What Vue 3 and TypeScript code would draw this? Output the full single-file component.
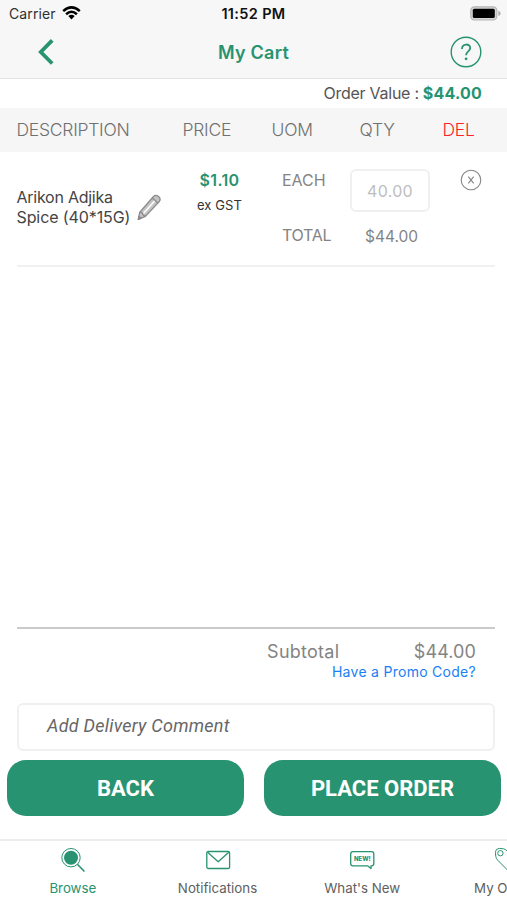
<script setup lang="ts">
import { ref } from 'vue'

interface CartItem {
  name: string[]
  price: string
  tax: string
  unit: string
  quantity: string
  total: string
}

interface Tab {
  id: 'browse' | 'mail' | 'news' | 'offers'
  label: string
}

const items = ref<CartItem[]>([
  { name: ['Arikon Adjika', 'Spice (40*15G)'], price: '$1.10', tax: 'ex GST', unit: 'EACH', quantity: '40.00', total: '$44.00' },
])

const tabs: Tab[] = [
  { id: 'browse', label: 'Browse' },
  { id: 'mail', label: 'Notifications' },
  { id: 'news', label: "What's New" },
  { id: 'offers', label: 'My O' },
]
const activeTab = ref<Tab['id']>('browse')
const orderValue = '$44.00'
</script>

<template>
  <main class="screen">
    <header class="top">
      <div class="status">
        <div class="carrier">
          <span>Carrier</span>
          <svg width="19" height="14" viewBox="0 0 19 14" fill="none" stroke="#000" stroke-width="2.5">
            <path d="M1.2 5.1Q9.5-2.4 17.8 5.1" />
            <path d="M4.1 8.2Q9.5 3.4 14.9 8.2" />
            <path d="M6.3 10.1Q9.5 7.5 12.7 10.1L9.5 13.6Z" fill="#000" stroke="none" />
          </svg>
        </div>
        <span class="clock">11:52 PM</span>
        <svg class="battery" width="31" height="15" viewBox="0 0 31 15">
          <rect x=".8" y=".8" width="26" height="13.2" rx="3.6" fill="#d5d5d5" stroke="#b5b5b5" stroke-width="1.2" />
          <rect x="2.8" y="2.7" width="22" height="9.4" rx="1.5" fill="#000" />
          <path d="M28.4 4.8Q30.6 5.5 30.6 7.4T28.4 10Z" fill="#a9a9a9" />
        </svg>
      </div>
      <nav class="nav">
        <svg width="16" height="26" viewBox="0 0 16 26" fill="none" stroke="#279370" stroke-width="3.8">
          <path d="M14.2 1.4 2.8 13 14.2 24.5" />
        </svg>
        <h1>My Cart</h1>
        <svg width="32" height="32" viewBox="0 0 32 32" fill="none" stroke="#279370">
          <circle cx="16" cy="16" r="14.8" stroke-width="1.4" />
          <path d="M12 13C12 7.2 20.2 7.2 20.2 12C20.2 15.5 16.1 15.2 16.1 19.2" stroke-width="1.8" />
          <circle cx="16.1" cy="22.8" r="1.4" fill="#279370" stroke="none" />
        </svg>
      </nav>
    </header>

    <div class="order-value"><span>Order Value :</span><strong>{{ orderValue }}</strong></div>

    <div class="columns">
      <span class="c-desc">DESCRIPTION</span>
      <span class="c-price">PRICE</span>
      <span class="c-uom">UOM</span>
      <span class="c-qty">QTY</span>
      <span class="c-del">DEL</span>
    </div>

    <section class="list">
      <article v-for="item in items" :key="item.name[0]" class="item">
        <div class="name">
          <div v-for="line in item.name" :key="line">{{ line }}</div>
        </div>
        <svg class="pencil" width="24" height="27" viewBox="0 0 24 27" fill="none" stroke="#8c8c8c" stroke-width="1.3" stroke-linejoin="round">
          <path d="M1.3 25.4 2.8 18.2 16.7 2.2Q18.9.3 21.5 2.4T22.5 7.2L8.4 22.4Z" fill="#c4c4c4" />
          <path d="M15.2 4 20.9 9" />
          <path d="M2.8 18.2 5 18.7 5.8 20.7 8.4 22.4" />
          <path d="M6.6 19.2 17.6 7" stroke="#fff" stroke-width="1.5" />
          <path d="m1.3 25.4.6-3 2.3 1.7Z" fill="#777" />
        </svg>
        <div class="price">
          <strong>{{ item.price }}</strong>
          <small>{{ item.tax }}</small>
        </div>
        <div class="units">
          <span class="unit">{{ item.unit }}</span>
          <span class="total-label">TOTAL</span>
        </div>
        <div class="amounts">
          <div class="qty">{{ item.quantity }}</div>
          <span class="total">{{ item.total }}</span>
        </div>
        <svg class="remove" width="22" height="22" viewBox="0 0 22 22" fill="none" stroke="#858585">
          <circle cx="11" cy="11" r="9.8" stroke-width="1.1" />
          <path d="m8.3 7.6 5.4 6.8m0-6.8-5.4 6.8" stroke-width="1.1" />
        </svg>
      </article>
    </section>

    <section class="summary">
      <div class="subtotal"><span class="sub-label">Subtotal</span><span class="sub-value">{{ orderValue }}</span></div>
      <a class="promo">Have a Promo Code?</a>
    </section>

    <div class="comment"><span>Add Delivery Comment</span></div>

    <div class="actions">
      <button type="button">BACK</button>
      <button type="button">PLACE ORDER</button>
    </div>

    <footer class="tabs">
      <div v-for="tab in tabs" :key="tab.id" class="tab" :class="[tab.id, { active: tab.id === activeTab }]" @click="activeTab = tab.id">
        <svg width="26" height="26" viewBox="0 0 26 26" fill="none" stroke="#279370" stroke-width="1.3" stroke-linejoin="round">
          <template v-if="tab.id === 'browse'">
            <circle cx="11" cy="10.7" r="9.2" stroke-width="1" />
            <circle cx="11" cy="10.7" r="7" fill="#279370" stroke="none" />
            <path d="m17.4 17.2 7 7.3" stroke-width="1.6" />
          </template>
          <template v-else-if="tab.id === 'mail'">
            <rect x="1.8" y="4.5" width="22.8" height="17" rx="1.6" />
            <path d="m2.6 5.3 10.6 9.5L23.8 5.3" />
          </template>
          <template v-else-if="tab.id === 'news'">
            <path d="M4 4.6H22.5Q24.8 4.6 24.8 6.9V16.6Q24.8 18.8 22.5 18.8H22V21.5L18.5 18.8H4Q1.7 18.8 1.7 16.6V6.9Q1.7 4.6 4 4.6Z" />
            <text x="5" y="14" class="new-text">NEW!</text>
          </template>
          <template v-else>
            <path d="M1.4 5.4Q1.4 1.5 5.3 1.4L9.5 1.8Q11.3 2 13.5 4.2L24.5 15.3 15.2 24.8 4 13.5Q2 11.5 1.8 9.5Z" stroke-width="1" />
            <circle cx="6.4" cy="6.2" r="2.7" stroke-width="1" />
          </template>
        </svg>
        <span>{{ tab.label }}</span>
      </div>
    </footer>
  </main>
</template>

<style>
body {
  margin: 0;
  overflow: hidden;
}
</style>

<style scoped>
.screen {
  width: 507px;
  height: 900px;
  overflow: hidden;
  display: flex;
  flex-direction: column;
  background: #fff;
  font-family: Inter, "Liberation Sans", sans-serif;
  color: #848484;
  white-space: nowrap;
}
.screen > * { flex: none; }
svg { display: block; flex: none; }
.top {
  box-sizing: border-box;
  height: 79px;
  background: #f7f7f7;
  border-bottom: 1px solid #e2e2e2;
}
.status {
  height: 28px;
  box-sizing: border-box;
  padding: 0 6px 2px 9px;
  display: grid;
  grid-template-columns: 1fr auto 1fr;
  align-items: center;
}
.carrier { display: flex; align-items: center; gap: 6px; font-size: 14px; color: #303030; letter-spacing: .1px; }
.clock { margin-left: -3px; font-size: 14.5px; font-weight: 600; color: #111; letter-spacing: .35px; }
.battery { justify-self: end; }
.nav {
  height: 48px;
  padding: 0 25px 0 38px;
  display: grid;
  grid-template-columns: 1fr auto 1fr;
  align-items: center;
}
.nav h1 { margin: 0 0 0 -13px; font-size: 18px; font-weight: 600; color: #279370; letter-spacing: .25px; }
.nav svg:last-child { justify-self: end; }
.order-value {
  height: 29px;
  padding-right: 25px;
  display: flex;
  justify-content: flex-end;
  align-items: center;
  gap: 4px;
  font-size: 16px;
  line-height: 20px;
  color: #555;
  letter-spacing: -.26px;
}
.order-value > * { margin-top: -1px; }
.order-value strong { color: #279370; font-weight: 700; letter-spacing: .2px; }
.columns {
  box-sizing: border-box;
  height: 44px;
  background: #f6f6f6;
  display: grid;
  grid-template-columns: 166px 89px 88px 83px 1fr;
  padding: 0 0 2px 16.5px;
  align-items: center;
  font-size: 17.5px;
  font-weight: 300;
  color: #707070;
  letter-spacing: -.25px;
}
.c-del { color: #ff2028; }
.list { height: 475px; }
.item {
  box-sizing: border-box;
  height: 115px;
  margin: 0 12px 0 17px;
  border-bottom: 2px solid #f0f0f0;
  display: grid;
  grid-template-columns: 120px 44px 101px 68px 110px 1fr;
}
.name { padding-top: 35px; margin-left: -.5px; font-size: 16px; line-height: 20px; letter-spacing: -.1px; color: #444; }
.name div:first-child { letter-spacing: -.25px; }
.pencil { margin-top: 42px; }
.price { display: flex; flex-direction: column; width: 77px; align-items: center; padding-top: 17px; }
.price strong { font-size: 16px; line-height: 22px; color: #279370; font-weight: 600; letter-spacing: .4px; }
.price small { font-size: 13px; line-height: 20px; margin-top: 4px; color: #333; letter-spacing: .1px; }
.units { display: flex; flex-direction: column; padding-top: 17px; font-size: 16px; line-height: 22px; }
.total-label { margin-top: 33px; letter-spacing: -.3px; }
.amounts { padding-top: 17px; }
.qty {
  box-sizing: border-box;
  width: 80px;
  height: 43px;
  border: 2px solid #f0f0f0;
  border-radius: 6px;
  text-align: center;
  font-size: 16px;
  line-height: 40px;
  color: #bebebe;
  letter-spacing: .3px;
}
.total { display: block; margin: 14px 0 0 15px; font-size: 15.5px; line-height: 22px; }
.remove { margin-top: 17px; }
.summary {
  box-sizing: border-box;
  height: 76px;
  margin: 0 12px 0 17px;
  padding: 12px 19px 0 0;
  border-top: 2px solid #cacaca;
}
.subtotal { display: flex; justify-content: flex-end; font-size: 18px; line-height: 21px; }
.sub-label { margin-right: 74.5px; letter-spacing: .25px; }
.sub-value { letter-spacing: .1px; }
.promo { display: block; text-align: right; font-size: 14px; line-height: 20px; color: #1a80f5; letter-spacing: .28px; }
.comment {
  box-sizing: border-box;
  height: 48px;
  margin: 0 12px 0 17px;
  padding-left: 28px;
  border: 2px solid #f0f0f0;
  border-radius: 6px;
  font: italic 18px/42px Roboto, sans-serif;
  letter-spacing: .25px;
  color: #666;
}
.actions { display: flex; box-sizing: border-box; gap: 20px; padding: 9px 6px 0 7px; height: 64.5px; }
.actions button {
  flex: 1;
  height: 55.5px;
  padding: 2px 0 0;
  border: 0;
  border-radius: 19px;
  background: #279370;
  color: #fff;
  font: 700 22px/54px Roboto, sans-serif;
}
.tabs {
  margin-top: 23.5px;
  height: 59px;
  border-top: 2px solid #ececec;
  display: grid;
  grid-template-columns: repeat(4, 144.7px);
}
.tab { display: flex; flex-direction: column; align-items: center; padding-top: 6px; font-size: 13.3px; line-height: 18px; color: #606060; }
.tab span { margin-top: 6px; margin-left: 1px; }
.tab svg { margin-left: 1px; }
.tab.active { color: #279370; }
.tab.offers { align-items: flex-start; padding-left: 39px; }
.tab.offers svg { margin-left: 21px; }
.new-text { fill: #279370; stroke: none; font: 800 6px Inter, sans-serif; }
</style>
